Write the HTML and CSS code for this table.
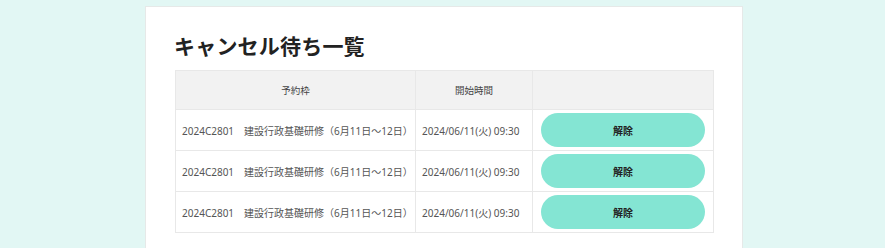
FILE: index.html
```html
<!DOCTYPE html>
<html lang="ja">
<head>
<meta charset="utf-8">
<link rel="stylesheet" href="styles.css">
</head>
<body>
<div class="page">
  <div class="card">
    <h1 class="title">キャンセル待ち一覧</h1>
    <table class="list">
      <colgroup>
        <col class="c-name">
        <col class="c-time">
        <col class="c-act">
      </colgroup>
      <thead>
        <tr>
          <th>予約枠</th>
          <th>開始時間</th>
          <th></th>
        </tr>
      </thead>
      <tbody>
        <tr>
          <td>2024C2801　建設行政基礎研修（6月11日～12日）</td>
          <td>2024/06/11(火) 09:30</td>
          <td><button class="btn">解除</button></td>
        </tr>
        <tr>
          <td>2024C2801　建設行政基礎研修（6月11日～12日）</td>
          <td>2024/06/11(火) 09:30</td>
          <td><button class="btn">解除</button></td>
        </tr>
        <tr>
          <td>2024C2801　建設行政基礎研修（6月11日～12日）</td>
          <td>2024/06/11(火) 09:30</td>
          <td><button class="btn">解除</button></td>
        </tr>
      </tbody>
    </table>
  </div>
</div>
</body>
</html>
```

FILE: styles.css
```css
html, body {
  margin: 0;
  padding: 0;
  background: #e2f7f4;
  font-family: "Noto Sans CJK JP", "Noto Sans", sans-serif;
  color: #333;
}
.page {
  display: flex;
  justify-content: center;
  padding-top: 6px;
  padding-left: 3px;
}
.card {
  width: 538px;
  background: #fff;
  border: 1px solid #e6e9e8;
  padding: 24px 29px 20px 29px;
  min-height: 240px;
}
.title {
  margin: 0 0 11px -1px;
  font-size: 21px;
  font-weight: 700;
  line-height: 28px;
  color: #222;
  letter-spacing: 0.2px;
}
.list {
  width: 538px;
  table-layout: fixed;
  border-collapse: collapse;
  font-family: "Noto Sans", "Noto Sans CJK JP", sans-serif;
  font-size: 10px;
}
.c-name { width: 240px; }
.c-time { width: 117px; }
.c-act { width: 181px; }
.list th, .list td {
  border: 1px solid #e8e8e8;
}
.list th {
  background: #f2f2f2;
  font-weight: 400;
  height: 38px;
  padding: 0;
  color: #444;
  font-size: 9.5px;
}
.list td {
  height: 40px;
  padding: 0 0 0 6px;
  color: #555;
  white-space: nowrap;
  overflow: hidden;
}
.list td:last-child { padding: 0 8px; }
.btn {
  display: block;
  width: 100%;
  height: 34px;
  border: none;
  border-radius: 17px;
  background: #84e5d3;
  font-family: "Noto Sans CJK JP", sans-serif;
  font-size: 10px;
  font-weight: 700;
  color: #222;
}
```
